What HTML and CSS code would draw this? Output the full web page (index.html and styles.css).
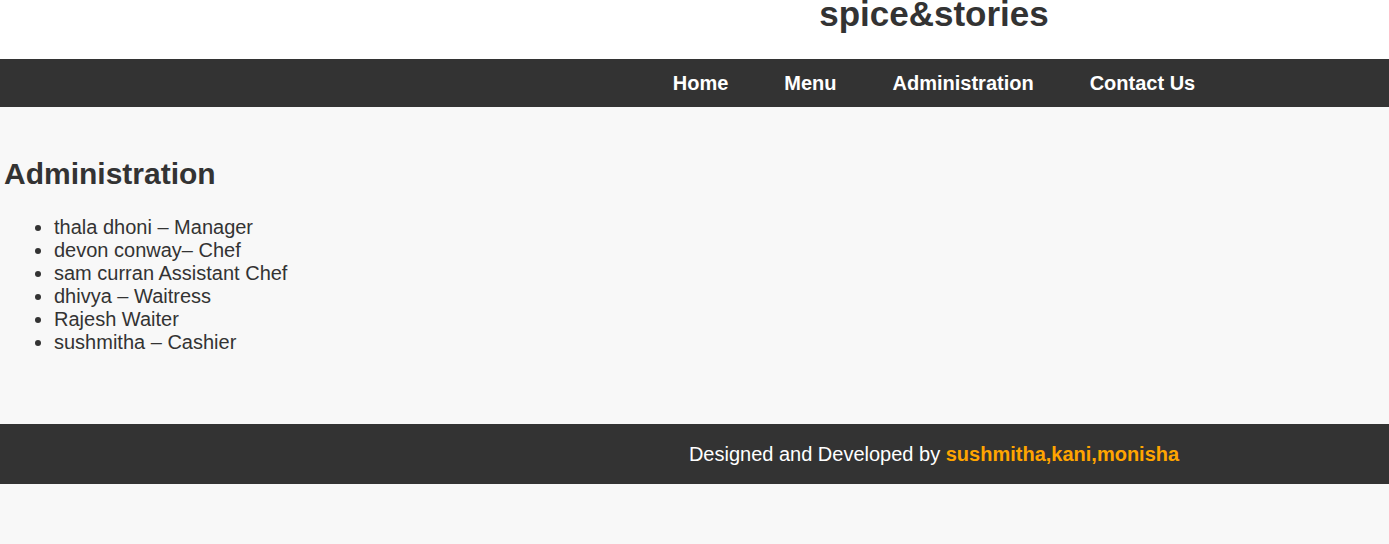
FILE: index.html
```html
<!DOCTYPE html>
<html lang="en">
<head>
<meta charset="utf-8">
<title>spice&amp;stories</title>
<link rel="stylesheet" href="styles.css">
</head>
<body>
<header class="site-header">
  <h1 class="brand">spice&amp;stories</h1>
</header>
<nav class="main-nav">
  <a href="#">Home</a>
  <a href="#">Menu</a>
  <a href="#">Administration</a>
  <a href="#">Contact Us</a>
</nav>
<main class="content">
  <h2 class="section-title">Administration</h2>
  <ul class="staff">
    <li>thala dhoni – Manager</li>
    <li>devon conway– Chef</li>
    <li>sam curran Assistant Chef</li>
    <li>dhivya – Waitress</li>
    <li>Rajesh Waiter</li>
    <li>sushmitha – Cashier</li>
  </ul>
</main>
<footer class="site-footer">
  Designed and Developed by <span class="authors">sushmitha,kani,monisha</span>
</footer>
</body>
</html>
```

FILE: styles.css
```css
html, body {
  margin: 0;
  padding: 0;
}
body {
  background: #f8f8f8;
  color: #333;
  font-family: "Liberation Sans", Arial, sans-serif;
}
.site-header {
  background: #fff;
  height: 59px;
  padding-left: 479px;
  text-align: center;
  box-sizing: border-box;
}
.brand {
  margin: 0;
  font-size: 35px;
  line-height: 27px;
  font-weight: bold;
  color: #333;
}
.main-nav {
  background: #333;
  height: 48px;
  box-sizing: border-box;
  padding: 12px 0 12px 479px;
  display: flex;
  justify-content: center;
  gap: 56px;
}
.main-nav a {
  color: #fff;
  text-decoration: none;
  font-weight: bold;
  font-size: 20px;
  line-height: 24px;
}
.content {
  padding: 25px 4px 50px;
}
.section-title {
  margin: 24.5px 0;
  font-size: 30px;
  font-weight: bold;
  line-height: 34.5px;
}
.staff {
  margin: 20px 0;
  padding-left: 50px;
  font-size: 20px;
  line-height: 23px;
}
.site-footer {
  background: #333;
  color: #fff;
  height: 60px;
  box-sizing: border-box;
  padding: 18px 0 18px 479px;
  text-align: center;
  font-size: 20px;
  line-height: 24px;
}
.authors {
  color: #ffa500;
  font-weight: bold;
}
```
